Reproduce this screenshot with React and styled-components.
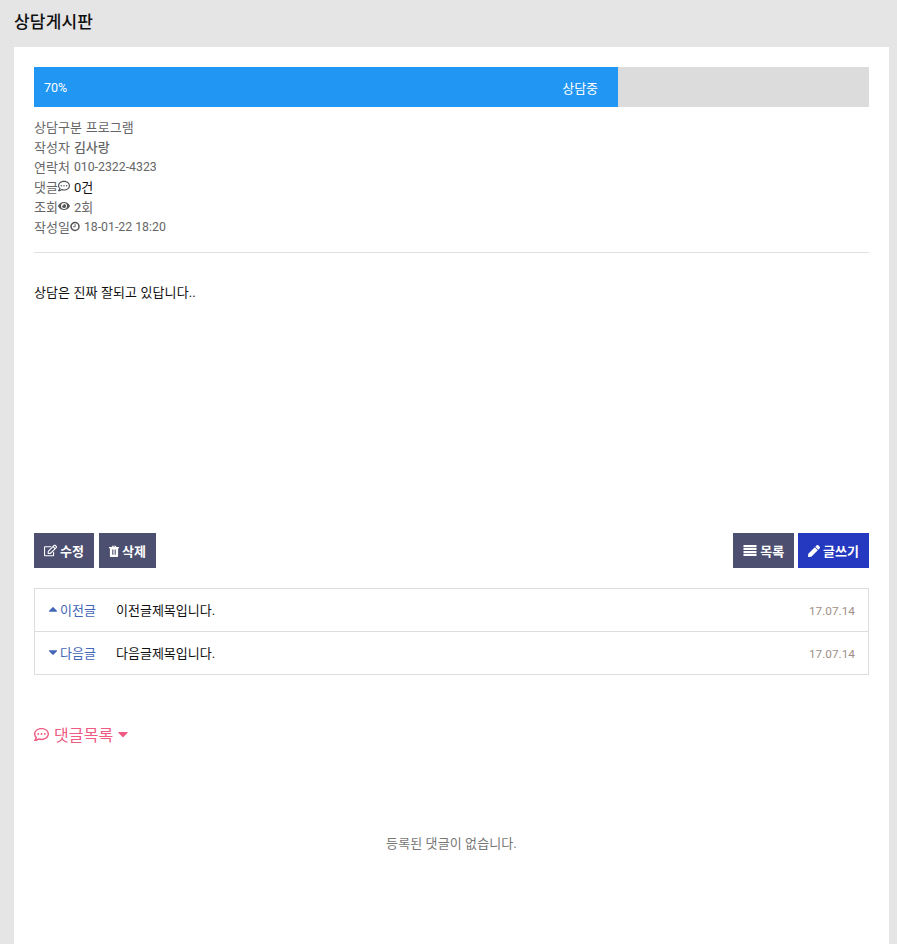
import React from 'react';
import styled, { createGlobalStyle } from 'styled-components';
import { FaRegEdit, FaPen, FaCaretUp, FaCaretDown, FaRegCommentDots, FaEye } from 'react-icons/fa';

const GlobalStyle = createGlobalStyle`
	html, body {
		margin: 0;
		padding: 0;
		height: 100%;
		overflow: hidden;
		background: #e5e5e5;
		font-family: Roboto, "Noto Sans CJK KR", sans-serif;
		font-size: 13px;
		color: #666;
	}
	* {
		box-sizing: border-box;
	}
`;

const Page = styled.div`
	height: 944px;
	padding: 0 8px 0 14px;
	overflow: hidden;
`;

const Title = styled.h1`
	margin: 0;
	height: 47px;
	line-height: 44px;
	font-size: 17px;
	font-weight: 500;
	letter-spacing: 0.2px;
	color: #111;
`;

const Panel = styled.section`
	background: #fff;
	padding: 20px;
	height: 897px;
`;

const ProgressTrack = styled.div`
	height: 40px;
	background: #dcdcdc;
`;

const ProgressFill = styled.div`
	height: 100%;
	background: #2196f3;
	color: #fff;
	display: flex;
	align-items: center;
	justify-content: space-between;
	padding: 0 20px 0 10px;
`;

const Percent = styled.span`
	font-size: 12.5px;
`;

const InfoList = styled.ul`
	list-style: none;
	margin: 0;
	padding: 9px 0 16px;
	border-bottom: 1px solid #e0e0e0;
`;

const InfoRow = styled.li`
	display: flex;
	align-items: center;
	height: 20px;
	color: #666;
`;

const InfoValue = styled.span`
	margin-left: 4px;
	padding-top: ${props => props.$num ? '2px' : '0'};
	color: ${props => props.$dark ? '#111' : '#666'};
	font-weight: ${props => props.$bold ? 500 : 400};
	font-size: ${props => props.$num ? '12.3px' : '13px'};
`;

const InfoIcon = styled.span`
	display: inline-flex;
	font-size: 12px;
	color: #555;
`;

const Content = styled.div`
	height: 280px;
	padding-top: 32px;
	color: #111;
	line-height: 16px;
	letter-spacing: 0.1px;
`;

const Toolbar = styled.div`
	display: flex;
	justify-content: space-between;
`;

const ButtonGroup = styled.div`
	display: flex;
	gap: ${props => props.$gap}px;
`;

const Button = styled.button`
	display: flex;
	align-items: center;
	gap: 3px;
	height: 35px;
	padding: 0 10px;
	border: none;
	background: ${props => props.$primary ? '#2439c0' : '#4c4f70'};
	color: #fff;
	font-family: inherit;
	font-size: 13px;
	font-weight: 700;
	svg {
		font-size: 13px;
	}
`;

const PostNav = styled.div`
	margin-top: 20px;
	border: 1px solid #ddd;
`;

const NavRow = styled.div`
	display: flex;
	align-items: center;
	height: 42px;
	padding: 0 13px 0 11px;
	&:first-child {
		height: 43px;
		border-bottom: 1px solid #ddd;
	}
`;

const NavLabel = styled.span`
	display: flex;
	align-items: center;
	width: 70px;
	padding-bottom: 2px;
	color: #4466b8;
	svg {
		font-size: 14px;
	}
`;

const NavTitle = styled.span`
	flex: 1;
	padding-bottom: 2px;
	color: #111;
`;

const NavDate = styled.span`
	padding-top: 1px;
	font-size: 11.8px;
	color: #a08f86;
`;

const CommentHead = styled.h2`
	display: flex;
	align-items: center;
	margin: 49px 0 0;
	height: 20px;
	font-size: 16px;
	font-weight: 400;
	letter-spacing: 0.1px;
	color: #ef5a82;
	gap: 5px;
	svg:first-child {
		font-size: 15px;
	}
	svg:last-child {
		margin-left: -3px;
		font-size: 16px;
	}
`;

const Empty = styled.p`
	margin: 90px 0 0;
	text-align: center;
	color: #777;
	font-size: 13px;
	letter-spacing: 0.1px;
	line-height: 20px;
`;

// FA4 style icons the package doesn't have
const ClockIcon = () => (
	<svg width="10" height="11" viewBox="0 0 11 11" fill="none" stroke="currentColor">
		<circle cx="5.5" cy="5.5" r="4.4" strokeWidth="1.7" />
		<path d="M5.6 2.8V5.8H3.4" strokeWidth="1" />
	</svg>
);

const TrashIcon = () => (
	<svg width="10" height="12" viewBox="0 0 11 13" fill="currentColor">
		<path d="M3.6 0.8H7.4L8 2.2H11V3.4H10V12.2C10 12.7 9.6 13 9.2 13H1.8C1.4 13 1 12.7 1 12.2V3.4H0V2.2H3ZM4.4 2.2H6.6L6.4 1.6H4.6ZM3.4 4.8V10.6H4.2V4.8ZM5.1 4.8V10.6H5.9V4.8ZM6.8 4.8V10.6H7.6V4.8Z" fillRule="evenodd" />
	</svg>
);

const ListIcon = () => (
	<svg width="14" height="11" viewBox="0 0 13 11" fill="currentColor">
		<path d="M0 0H13V2.2H0ZM0 3H13V5.1H0ZM0 5.9H13V8H0ZM0 8.8H13V11H0Z" />
	</svg>
);

const App = () => {
	return (
		<Page>
			<GlobalStyle />
			<Title>상담게시판</Title>
			<Panel>
				<ProgressTrack>
					<ProgressFill style={{ width: '69.95%' }}>
						<Percent>70%</Percent>
						<span>상담중</span>
					</ProgressFill>
				</ProgressTrack>
				<InfoList>
					<InfoRow>상담구분<InfoValue>프로그램</InfoValue></InfoRow>
					<InfoRow>작성자<InfoValue $bold>김사랑</InfoValue></InfoRow>
					<InfoRow>연락처<InfoValue $num>010-2322-4323</InfoValue></InfoRow>
					<InfoRow>댓글<InfoIcon><FaRegCommentDots /></InfoIcon><InfoValue $dark>0건</InfoValue></InfoRow>
					<InfoRow>조회<InfoIcon><FaEye /></InfoIcon><InfoValue>2회</InfoValue></InfoRow>
					<InfoRow>작성일<InfoIcon><ClockIcon /></InfoIcon><InfoValue $num>18-01-22 18:20</InfoValue></InfoRow>
				</InfoList>
				<Content>상담은 진짜 잘되고 있답니다..</Content>
				<Toolbar>
					<ButtonGroup $gap={5}>
						<Button><FaRegEdit />수정</Button>
						<Button><TrashIcon />삭제</Button>
					</ButtonGroup>
					<ButtonGroup $gap={4}>
						<Button><ListIcon />목록</Button>
						<Button $primary><FaPen size={12} />글쓰기</Button>
					</ButtonGroup>
				</Toolbar>
				<PostNav>
					<NavRow>
						<NavLabel><FaCaretUp />이전글</NavLabel>
						<NavTitle>이전글제목입니다.</NavTitle>
						<NavDate>17.07.14</NavDate>
					</NavRow>
					<NavRow>
						<NavLabel><FaCaretDown />다음글</NavLabel>
						<NavTitle>다음글제목입니다.</NavTitle>
						<NavDate>17.07.14</NavDate>
					</NavRow>
				</PostNav>
				<CommentHead><FaRegCommentDots />댓글목록<FaCaretDown /></CommentHead>
				<Empty>등록된 댓글이 없습니다.</Empty>
			</Panel>
		</Page>
	);
};

export default App;
